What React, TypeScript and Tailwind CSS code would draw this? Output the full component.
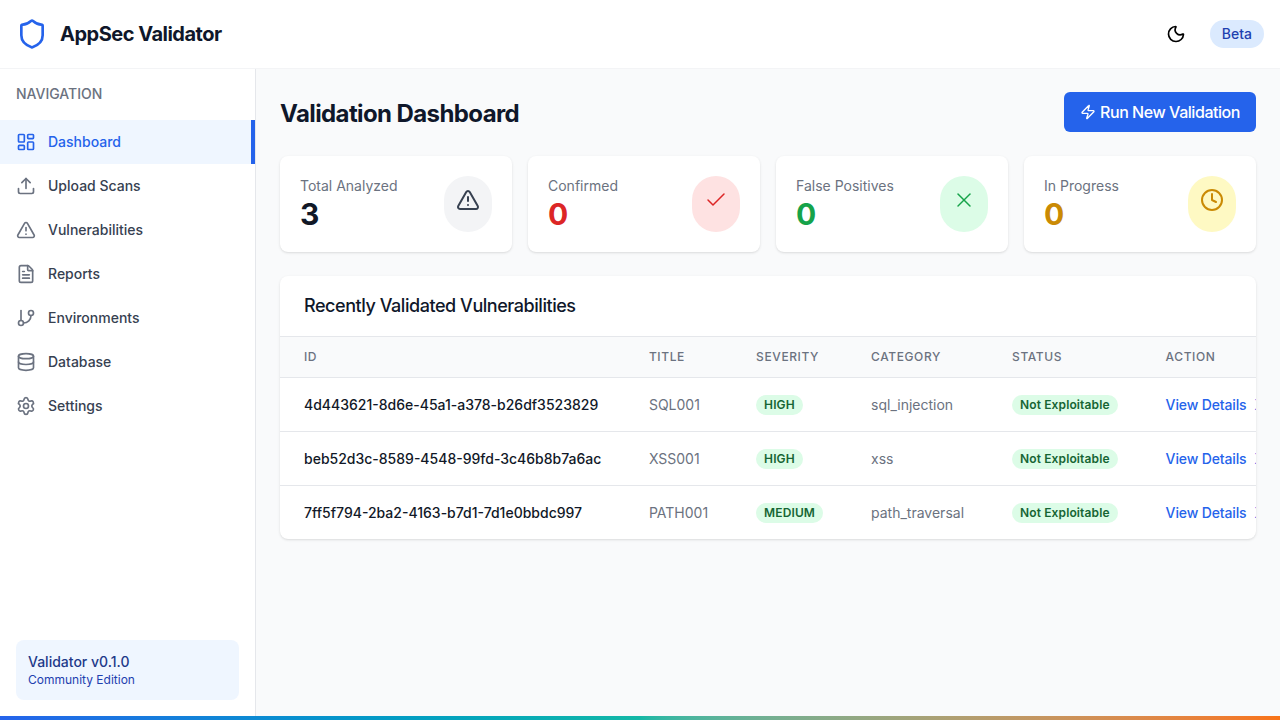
import * as React from 'react';
import {
  AlertTriangle,
  Check,
  Clock,
  Database,
  FileText,
  GitBranch,
  LayoutDashboard,
  Moon,
  Settings,
  Shield,
  Upload,
  X,
  Zap,
} from 'lucide-react';

const navItems = [
  { label: 'Dashboard', icon: LayoutDashboard, active: true },
  { label: 'Upload Scans', icon: Upload },
  { label: 'Vulnerabilities', icon: AlertTriangle },
  { label: 'Reports', icon: FileText },
  { label: 'Environments', icon: GitBranch },
  { label: 'Database', icon: Database },
  { label: 'Settings', icon: Settings },
];

const rows = [
  {
    id: '4d443621-8d6e-45a1-a378-b26df3523829',
    title: 'SQL001',
    severity: 'HIGH',
    category: 'sql_injection',
  },
  {
    id: 'beb52d3c-8589-4548-99fd-3c46b8b7a6ac',
    title: 'XSS001',
    severity: 'HIGH',
    category: 'xss',
  },
  {
    id: '7ff5f794-2ba2-4163-b7d1-7d1e0bbdc997',
    title: 'PATH001',
    severity: 'MEDIUM',
    category: 'path_traversal',
  },
];

function StatCard(props: any) {
  const { label, value, valueClass, pillClass, children } = props;

  return (
    <div className="flex justify-between rounded-lg bg-white p-5 shadow-sm">
      <div>
        <div className="text-sm leading-5 text-[#6b7280]">{label}</div>
        <div className={`text-3xl leading-9 font-bold ${valueClass}`}>{value}</div>
      </div>
      <div className={`rounded-full p-3 ${pillClass}`}>{children}</div>
    </div>
  );
}

function Pill({ children }: { children: React.ReactNode }) {
  return (
    <span className="inline-block rounded-full bg-[#dcfce7] px-2 py-0.5 text-xs leading-4 font-semibold tracking-[0.01em] text-[#166534]">
      {children}
    </span>
  );
}

export default function App() {
  return (
    <div className="flex h-screen flex-col overflow-hidden bg-[#f9fafb] font-['Inter',sans-serif]">
      <header className="flex h-[69px] shrink-0 items-center justify-between border-b border-[#f3f4f6] bg-white px-4">
        <div className="flex items-center gap-3">
          <Shield size={32} className="text-[#2563eb]" />
          <span className="text-xl font-bold tracking-tight text-[#0f172a]">AppSec Validator</span>
        </div>
        <div className="flex items-center gap-4">
          <button className="p-2 text-black">
            <Moon size={20} />
          </button>
          <span className="rounded-full bg-[#dbeafe] px-3 py-1 text-sm leading-5 font-medium text-[#1e40af]">
            Beta
          </span>
        </div>
      </header>

      <div className="flex min-h-0 flex-1">
        <aside className="flex w-64 shrink-0 flex-col border-r border-[#e5e7eb] bg-white">
          <div className="px-4 pt-[15px] pb-4 text-sm leading-5 font-medium text-[#6b7280]">NAVIGATION</div>
          <nav className="flex flex-col">
            {navItems.map((item) => {
              const Icon = item.icon;
              return (
                <a
                  key={item.label}
                  href="#"
                  className={
                    item.active
                      ? 'flex h-11 items-center gap-3 border-r-4 border-[#2563eb] bg-[#eff6ff] px-4 text-sm font-medium text-[#2563eb]'
                      : 'flex h-11 items-center gap-3 px-4 text-sm font-medium text-[#374151]'
                  }
                >
                  <Icon size={20} className={item.active ? 'text-[#2563eb]' : 'text-[#6b7280]'} />
                  {item.label}
                </a>
              );
            })}
          </nav>
          <div className="mt-auto p-4">
            <div className="rounded-lg bg-[#eff6ff] p-3">
              <div className="text-sm leading-5 font-medium text-[#1e3a8a]">Validator v0.1.0</div>
              <div className="text-xs leading-4 text-[#1e40af]">Community Edition</div>
            </div>
          </div>
        </aside>

        <main className="min-w-0 flex-1 p-6 pt-[23px]">
          <div className="mb-6 flex items-center justify-between">
            <h1 className="mt-1 text-2xl font-bold tracking-tight text-[#0f172a]">Validation Dashboard</h1>
            <button className="flex h-10 items-center gap-1 rounded-md bg-[#2563eb] px-4 text-base font-medium tracking-[-0.028em] text-white">
              <Zap size={16} />
              Run New Validation
            </button>
          </div>

          <div className="mb-6 grid grid-cols-4 gap-4">
            <StatCard label="Total Analyzed" value="3" valueClass="text-[#111827]" pillClass="bg-[#f3f4f6] text-[#374151]">
              <AlertTriangle size={24} />
            </StatCard>
            <StatCard label="Confirmed" value="0" valueClass="text-[#dc2626]" pillClass="bg-[#fee2e2] text-[#dc2626]">
              <Check size={24} strokeWidth={1.5} />
            </StatCard>
            <StatCard label="False Positives" value="0" valueClass="text-[#16a34a]" pillClass="bg-[#dcfce7] text-[#16a34a]">
              <X size={24} strokeWidth={1.5} />
            </StatCard>
            <StatCard label="In Progress" value="0" valueClass="text-[#ca8a04]" pillClass="bg-[#fef9c3] text-[#ca8a04]">
              <Clock size={24} />
            </StatCard>
          </div>

          <div className="overflow-hidden rounded-lg bg-white shadow-sm">
            <div className="flex h-[61px] items-center border-b border-[#e5e7eb] px-6 text-lg font-medium tracking-tight text-[#0f172a]">
              Recently Validated Vulnerabilities
            </div>
            <div className="overflow-x-hidden">
              <table>
                <thead className="bg-[#f9fafb]">
                  <tr className="border-b border-[#e5e7eb] text-left text-xs font-medium tracking-wider text-[#6b7280] uppercase">
                    <th className="h-10 pr-[23.5px] pl-6 font-medium">ID</th>
                    <th className="px-6 font-medium">Title</th>
                    <th className="px-6 font-medium">Severity</th>
                    <th className="px-6 font-medium">Category</th>
                    <th className="px-6 font-medium">Status</th>
                    <th className="px-6 font-medium">Action</th>
                  </tr>
                </thead>
                <tbody>
                  {rows.map((row, idx) => (
                    <tr key={row.id} className={idx < rows.length - 1 ? 'border-b border-[#e5e7eb]' : ''}>
                      <td className="h-[54px] pt-[2px] pr-[23.5px] pl-6 text-sm font-medium whitespace-nowrap text-[#111827]">{row.id}</td>
                      <td className="px-6 pt-[2px] text-sm whitespace-nowrap text-[#6b7280]">{row.title}</td>
                      <td className="px-6 text-sm whitespace-nowrap">
                        <Pill>{row.severity}</Pill>
                      </td>
                      <td className="px-6 pt-[2px] text-sm whitespace-nowrap text-[#6b7280]">{row.category}</td>
                      <td className="px-6 text-sm whitespace-nowrap">
                        <Pill>Not Exploitable</Pill>
                      </td>
                      <td className="px-6 pt-[2px] text-sm font-medium tracking-[-0.01em] whitespace-nowrap text-[#2563eb]">
                        <a href="#">View Details</a>
                        <a href="#" className="ml-2">
                          X
                        </a>
                      </td>
                    </tr>
                  ))}
                </tbody>
              </table>
            </div>
          </div>
        </main>
      </div>

      <div className="h-1 shrink-0 bg-gradient-to-r from-[#2563eb] via-[#14b8a6] to-[#f97316]" />
    </div>
  );
}
